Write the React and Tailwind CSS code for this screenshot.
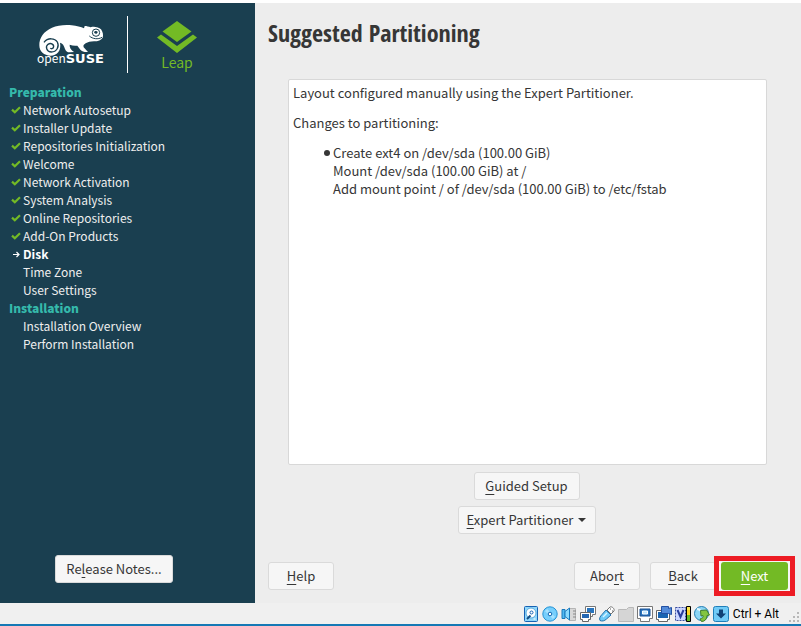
import React from "react";

const done = [
  "Network Autosetup",
  "Installer Update",
  "Repositories Initialization",
  "Welcome",
  "Network Activation",
  "System Analysis",
  "Online Repositories",
  "Add-On Products",
];

function Check() {
  return (
    <svg className="h-2 w-[10px]" viewBox="0 0 10 8" fill="none" stroke="#73ba25" strokeWidth="2.2" aria-hidden="true">
      <path d="M1 3.600 3.800 6.200 9 1.200" />
    </svg>
  );
}

function Arrow() {
  return (
    <svg className="h-[7px] w-[10px]" viewBox="0 0 10 7" fill="none" stroke="#fff" strokeWidth="1.2" aria-hidden="true">
      <path d="M2 3.500h6M5.500 1 8 3.500 5.500 6" />
    </svg>
  );
}

function Step({ icon, children, current }) {
  return (
    <li className={"flex h-[18px] items-center gap-[2px] pl-[2px] " + (current ? "font-bold text-white" : "text-[#eeeeee]")}>
      <span className="w-[10px]">{icon}</span>
      {children}
    </li>
  );
}

function Geeko() {
  return (
    <svg className="h-8 w-[66px]" viewBox="24 24 198 96" aria-hidden="true">
      <path
        fill="#fff"
        d="M28 88C27 66 42 45 66 35 82 28 105 26 125 28 140 29 153 33 162 37L164 30C170 30 176 32 182 34 194 30 206 35 213 40 218 47 221 57 218 65 214 72 204 76 192 76 181 76 174 78 167 82 161 86 159 89 161 94L174 108C165 109 156 107 151 101L142 89C134 90 126 89 119 86 118 94 123 102 132 108L120 109C111 109 108 106 105 99 102 89 98 81 90 80 95 104 80 119 62 119 42 119 28 107 28 88z"
      />
      <path
        d="M42 79C53 64 75 66 82 78 89 92 80 108 64 108 50 108 45 92 54 85 63 79 74 86 70 95 68 99 63 99 61 96"
        fill="none"
        stroke="#1a3f50"
        strokeWidth="4"
      />
      <circle cx="198" cy="50" r="11" fill="none" stroke="#1a3f50" strokeWidth="3" />
      <path d="M192 49c2-5 9-5 11-1 0 5-6 7-9 4" fill="#1a3f50" />
      <path d="M178 60c10 9 26 11 38 4" fill="none" stroke="#1a3f50" strokeWidth="3" />
    </svg>
  );
}

function Key({ children }) {
  return <span className="underline underline-offset-[3px]">{children}</span>;
}

const button =
  "flex h-7 items-center justify-center rounded-[3px] border border-[#dadada] bg-[#f6f6f6] pb-px";

function StatusIcon({ children }) {
  return (
    <svg className="h-4 w-4 shrink-0" viewBox="0 0 16 16" fill="none" aria-hidden="true">
      {children}
    </svg>
  );
}

function StatusIcons() {
  return (
    <div className="flex gap-[3px]">
      <StatusIcon>
        <rect x="1.500" y=".5" width="13" height="15" rx="1" fill="#8fd6fa" stroke="#1762b3" />
        <circle cx="8" cy="7" r="5" fill="#fff" stroke="#5aa9dd" />
        <circle cx="8.500" cy="6.500" r="1.500" fill="#fff" stroke="#1762b3" />
        <path d="M4 13 7.500 9.500" stroke="#124b82" strokeWidth="2" />
        <path d="M10.500 13h2" stroke="#fff" />
      </StatusIcon>
      <StatusIcon>
        <circle cx="8" cy="8" r="7.200" fill="#77cffc" stroke="#2593d4" />
        <path d="M4 4 8 8l4 4" stroke="#a6e2ff" strokeWidth="3" />
        <circle cx="8" cy="8" r="1.800" fill="#fff" stroke="#1268b2" />
      </StatusIcon>
      <StatusIcon>
        <path d="M8.500 2.500h6v12h-6z" fill="#d8d8d8" stroke="#b5b5b5" />
        <path d="M12 5h3m-3 3h3m-3 3h3" stroke="#888" />
        <path d="M1 3.500h3v9H1z" fill="#51b9f1" stroke="#1878bd" />
        <path d="M4 5.500 8.500 2v12L4 10.500z" fill="#8bdbff" stroke="#1878bd" />
      </StatusIcon>
      <StatusIcon>
        <path d="M5.500.5h10v8h-3v2h-7z" fill="#fff" stroke="#777" />
        <path d="M7 2h7v5H7z" fill="#2874bd" />
        <path d="M.5 6.500h10v7h-2v2h-6v-2h-2z" fill="#fff" stroke="#666" />
        <path d="M2 8h7v4H2z" fill="#2467b3" />
      </StatusIcon>
      <StatusIcon>
        <path d="M1 14.500c-1-2 0-4 2-6l4-4.500 5 5-4.500 4c-2 2-4.500 2.500-6.500 1.500z" fill="#70cbf8" stroke="#2471aa" />
        <path d="m8 4 3-3c2-1 5 2 4 4l-3 3z" fill="#fff" stroke="#777" />
        <path d="M11 3h1m1 2h1" stroke="#555" />
        <path d="M4 11 8 7" stroke="#d8f4ff" strokeWidth="1.500" />
      </StatusIcon>
      <StatusIcon>
        <path d="M.5 3.500h8l2-2h5v14H.5z" fill="#d5d5d5" stroke="#b8b8b8" />
      </StatusIcon>
      <StatusIcon>
        <path d="M.5.500h15v12h-3v3h-9v-3h-3z" fill="#fff" stroke="#777" />
        <path d="M3 3h10v7H3z" fill="#2a73bd" stroke="#174f92" />
        <path d="M5.500 5h5v3h-5z" fill="#bde4ff" stroke="#fff" />
      </StatusIcon>
      <StatusIcon>
        <path d="M.5 4.500h13v9h-2v2h-9v-2h-2z" fill="#fff" stroke="#666" />
        <path d="M2 6h10v6H2z" fill="#1b65b1" />
        <path d="M5.500.5h7v2l3-1v7l-3-1h-7z" fill="#538bd9" stroke="#2350a2" />
      </StatusIcon>
      <StatusIcon>
        <path d="M.5 1.500h10v13H.500z" fill="#cbd6ff" stroke="#3a4d9f" strokeDasharray="2 1" />
        <path d="M2.500 4 5.500 11 8.500 4" stroke="#293e9c" strokeWidth="2" />
        <path d="M11.500.5h4v15h-4z" fill="#ffd321" stroke="#000" />
        <path d="M12 1h3v3h-3z" fill="#ffe94f" />
        <path d="M12 9h3v6h-3z" fill="#65bb27" />
      </StatusIcon>
      <StatusIcon>
        <circle cx="7.500" cy="7.500" r="7" fill="#8bd5f5" stroke="#247db2" />
        <path d="M3 3c4 0 4 4 7 3" stroke="#e4f8ff" strokeWidth="2" />
        <path d="m6.500 4.500 6-.5 3 5-2.500.5c0 4-2.500 6-5.500 6L6 13c3-1 3.500-2 3-3.500L7 10z" fill="#83c53f" stroke="#427e2c" />
      </StatusIcon>
      <StatusIcon>
        <rect x=".5" y=".5" width="15" height="15" rx="2" fill="#71cbf7" stroke="#207fb9" />
        <path d="M6 3.500h4v4h3l-5 5-5-5h3z" fill="#104276" />
      </StatusIcon>
    </div>
  );
}

export default function App() {
  return (
    <div className="flex min-h-screen flex-col border-b-2 border-[#1579b5] bg-[#f0f0f0] pt-[3px] font-['Noto_Sans_CJK_SC',sans-serif] text-[13px] leading-[18px] text-[#363636] shadow-[inset_0_3px_0_#fff]">
      <div className="flex flex-1">
        <aside className="flex w-[255px] shrink-0 flex-col bg-[#1a3f50]">
          <header className="flex h-[80px] pt-[13px]">
            <div className="flex h-[57px] w-[128px] flex-col items-center border-r border-white pl-[14px] pt-2 text-white">
              <Geeko />
              <div className="-mt-[6px] flex items-baseline text-[12px] leading-[16px]">
                open<b className="font-['DejaVu_Sans',sans-serif] text-[13px]">SUSE</b>
              </div>
            </div>
            <div className="flex flex-col items-center pl-[28px] pt-[4px] text-[#73ba25]">
              <svg className="h-[34px] w-[42px]" viewBox="0 0 42 34" fill="#73ba25" aria-hidden="true">
                <path d="m21 1 14.500 10.500L21 22 6.500 11.500z" />
                <path d="m1 17.500 4-3 16 11.500 16-11.500 4 3L21 33z" />
              </svg>
              <span className="text-[14px] leading-[16px]">Leap</span>
            </div>
          </header>
          <nav className="px-[9px] text-[12px]" aria-label="Installation steps">
            <h2 className="font-black text-[#35b9ab]">Preparation</h2>
            <ul>
              {done.map((name) => (
                <Step key={name} icon={<Check />}>{name}</Step>
              ))}
              <Step icon={<Arrow />} current>Disk</Step>
              <Step>Time Zone</Step>
              <Step>User Settings</Step>
            </ul>
            <h2 className="font-black text-[#35b9ab]">Installation</h2>
            <ul>
              <Step>Installation Overview</Step>
              <Step>Perform Installation</Step>
            </ul>
          </nav>
          <div className="mt-auto flex justify-center pb-5 pr-[27px]">
            <button className={button + " w-[118px]"}>
              <span>Re<Key>l</Key>ease Notes...</span>
            </button>
          </div>
        </aside>
        <main className="flex min-w-0 flex-1 flex-col bg-[#ededed] pl-[13px] pr-[6px]">
          <h1 className="pt-[14px] font-['Open_Sans_Condensed','Roboto_Condensed','Noto_Sans_CJK_SC',sans-serif] text-[24px] font-bold leading-[32px]">Suggested Partitioning</h1>
          <section className="ml-5 mr-7 mt-[30px] flex-1 rounded-[2px] border border-[#d8d8d8] bg-white px-1 pt-1">
            <p>Layout configured manually using the Expert Partitioner.</p>
            <p className="mt-3">Changes to partitioning:</p>
            <ul className="mt-3 pl-10">
              <li className="relative">
                <span className="absolute -left-[9px] top-[6px] size-[6px] rounded-full bg-[#363636]" />
                Create ext4 on /dev/sda (100.00 GiB)<br />
                Mount /dev/sda (100.00 GiB) at /<br />
                Add mount point / of /dev/sda (100.00 GiB) to /etc/fstab
              </li>
            </ul>
          </section>
          <div className="mr-[10px] flex flex-col items-center gap-[6px] pt-[7px]">
            <button className={button + " w-[106px]"}><span><Key>G</Key>uided Setup</span></button>
            <button className={button + " w-[138px] gap-[5px]"}>
              <span><Key>E</Key>xpert Partitioner</span>
              <svg className="h-1 w-2" viewBox="0 0 8 4" fill="#363636" aria-hidden="true"><path d="M0 0h8L4 4z" /></svg>
            </button>
          </div>
          <div className="flex items-center pb-[7px] pt-[22px]">
            <button className={button + " w-[66px]"}><span><Key>H</Key>elp</span></button>
            <button className={button + " ml-auto w-[66px]"}><span>Abo<Key>r</Key>t</span></button>
            <button className={button + " ml-[10px] w-[66px]"}><span><Key>B</Key>ack</span></button>
            <div className="-ml-[2px] h-10 w-[81px] border-[5px] border-[#ed1c24] bg-[#f6f6f6] px-[2px] py-px">
              <button className="flex h-7 w-full items-center justify-center rounded-[3px] bg-[#73ba25] pb-px text-white">
                <span><Key>N</Key>ext</span>
              </button>
            </div>
          </div>
        </main>
      </div>
      <footer className="flex h-[21px] items-center justify-end">
        <StatusIcons />
        <span className="pl-1 font-['Roboto',sans-serif] text-[12px] text-black">Ctrl + Alt</span>
        <svg className="ml-[10px] h-3 w-3 self-end" viewBox="0 0 12 12" fill="#b8b8b8" aria-hidden="true">
          <path d="M8 0h2v2H8zM4 4h2v2H4zM8 4h2v2H8zM0 8h2v2H0zM4 8h2v2H4zM8 8h2v2H8z" />
        </svg>
      </footer>
    </div>
  );
}
